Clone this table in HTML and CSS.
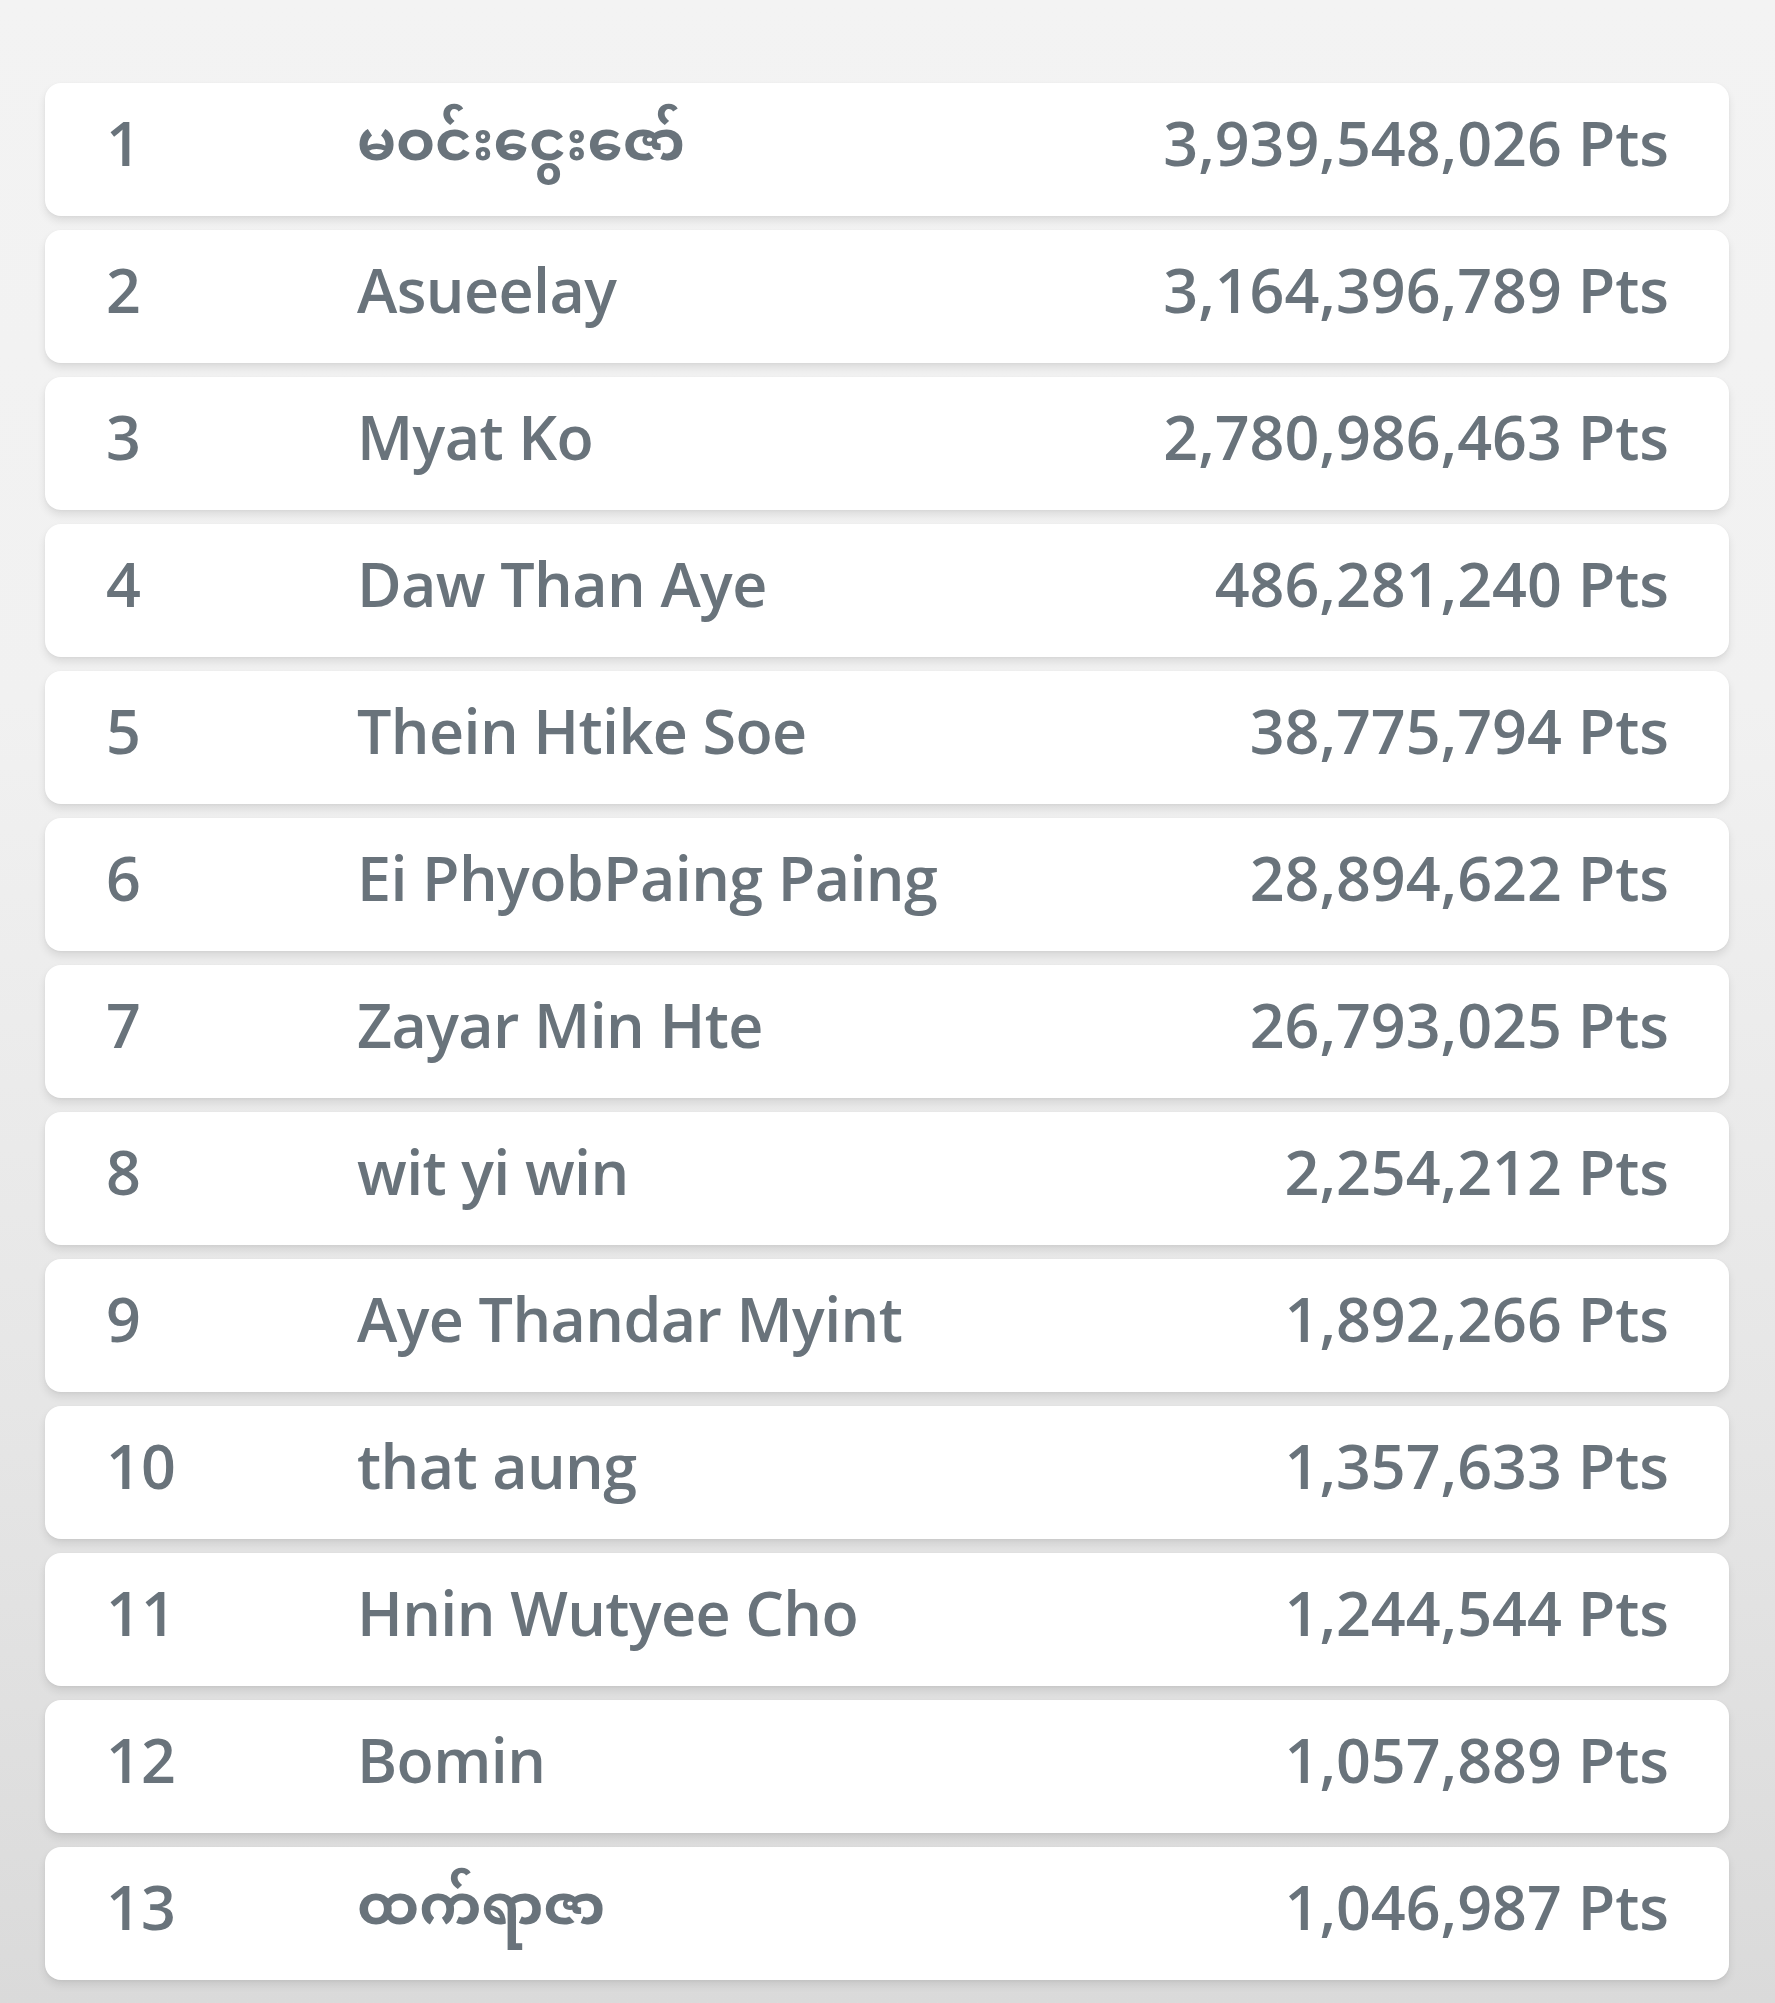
FILE: index.html
```html
<!DOCTYPE html>
<html lang="my">
<head>
<meta charset="utf-8">
<title>Leaderboard</title>
<link rel="stylesheet" href="styles.css">
</head>
<body>
<main class="board">
  <div class="row"><span class="rank">1</span><span class="name my">မဝင်းငွေးဇော်</span><span class="pts">3,939,548,026 Pts</span></div>
  <div class="row"><span class="rank">2</span><span class="name">Asueelay</span><span class="pts">3,164,396,789 Pts</span></div>
  <div class="row"><span class="rank">3</span><span class="name">Myat Ko</span><span class="pts">2,780,986,463 Pts</span></div>
  <div class="row"><span class="rank">4</span><span class="name">Daw Than Aye</span><span class="pts">486,281,240 Pts</span></div>
  <div class="row"><span class="rank">5</span><span class="name">Thein Htike Soe</span><span class="pts">38,775,794 Pts</span></div>
  <div class="row"><span class="rank">6</span><span class="name">Ei PhyobPaing Paing</span><span class="pts">28,894,622 Pts</span></div>
  <div class="row"><span class="rank">7</span><span class="name">Zayar Min Hte</span><span class="pts">26,793,025 Pts</span></div>
  <div class="row"><span class="rank">8</span><span class="name">wit yi win</span><span class="pts">2,254,212 Pts</span></div>
  <div class="row"><span class="rank">9</span><span class="name">Aye Thandar Myint</span><span class="pts">1,892,266 Pts</span></div>
  <div class="row"><span class="rank">10</span><span class="name">that aung</span><span class="pts">1,357,633 Pts</span></div>
  <div class="row"><span class="rank">11</span><span class="name">Hnin Wutyee Cho</span><span class="pts">1,244,544 Pts</span></div>
  <div class="row"><span class="rank">12</span><span class="name">Bomin</span><span class="pts">1,057,889 Pts</span></div>
  <div class="row"><span class="rank">13</span><span class="name my">ထက်ရာဇာ</span><span class="pts">1,046,987 Pts</span></div>
</main>
</body>
</html>
```
FILE: styles.css
```css
html, body {
  margin: 0;
  padding: 0;
}
body {
  min-height: 2003px;
  background: linear-gradient(180deg, #f3f3f3 0%, #f1f1f1 35%, #e6e6e6 70%, #dadada 100%);
  font-family: "Open Sans", "Noto Sans", "Noto Sans Myanmar", "Padauk", "Myanmar Text", sans-serif;
  color: #69737b;
}
.board {
  display: flex;
  flex-direction: column;
  gap: 14px;
  padding: 83px 46px 24px 45px;
}
.row {
  display: grid;
  grid-template-columns: 251px 1fr auto;
  align-items: center;
  height: 133px;
  box-sizing: border-box;
  padding: 0 60px 15px 61px;
  background: #ffffff;
  border-radius: 16px;
  box-shadow: 0 5px 9px rgba(0, 0, 0, 0.09), 0 1px 3px rgba(0, 0, 0, 0.04);
  font-size: 61px;
  line-height: 83px;
  font-weight: 600;
  white-space: nowrap;
}
.name {
  letter-spacing: -0.01em;
}
.name.my {
  font-size: 56px;
  font-weight: 700;
  letter-spacing: 0;
  padding-bottom: 8px;
}
.pts {
  text-align: right;
}
```
